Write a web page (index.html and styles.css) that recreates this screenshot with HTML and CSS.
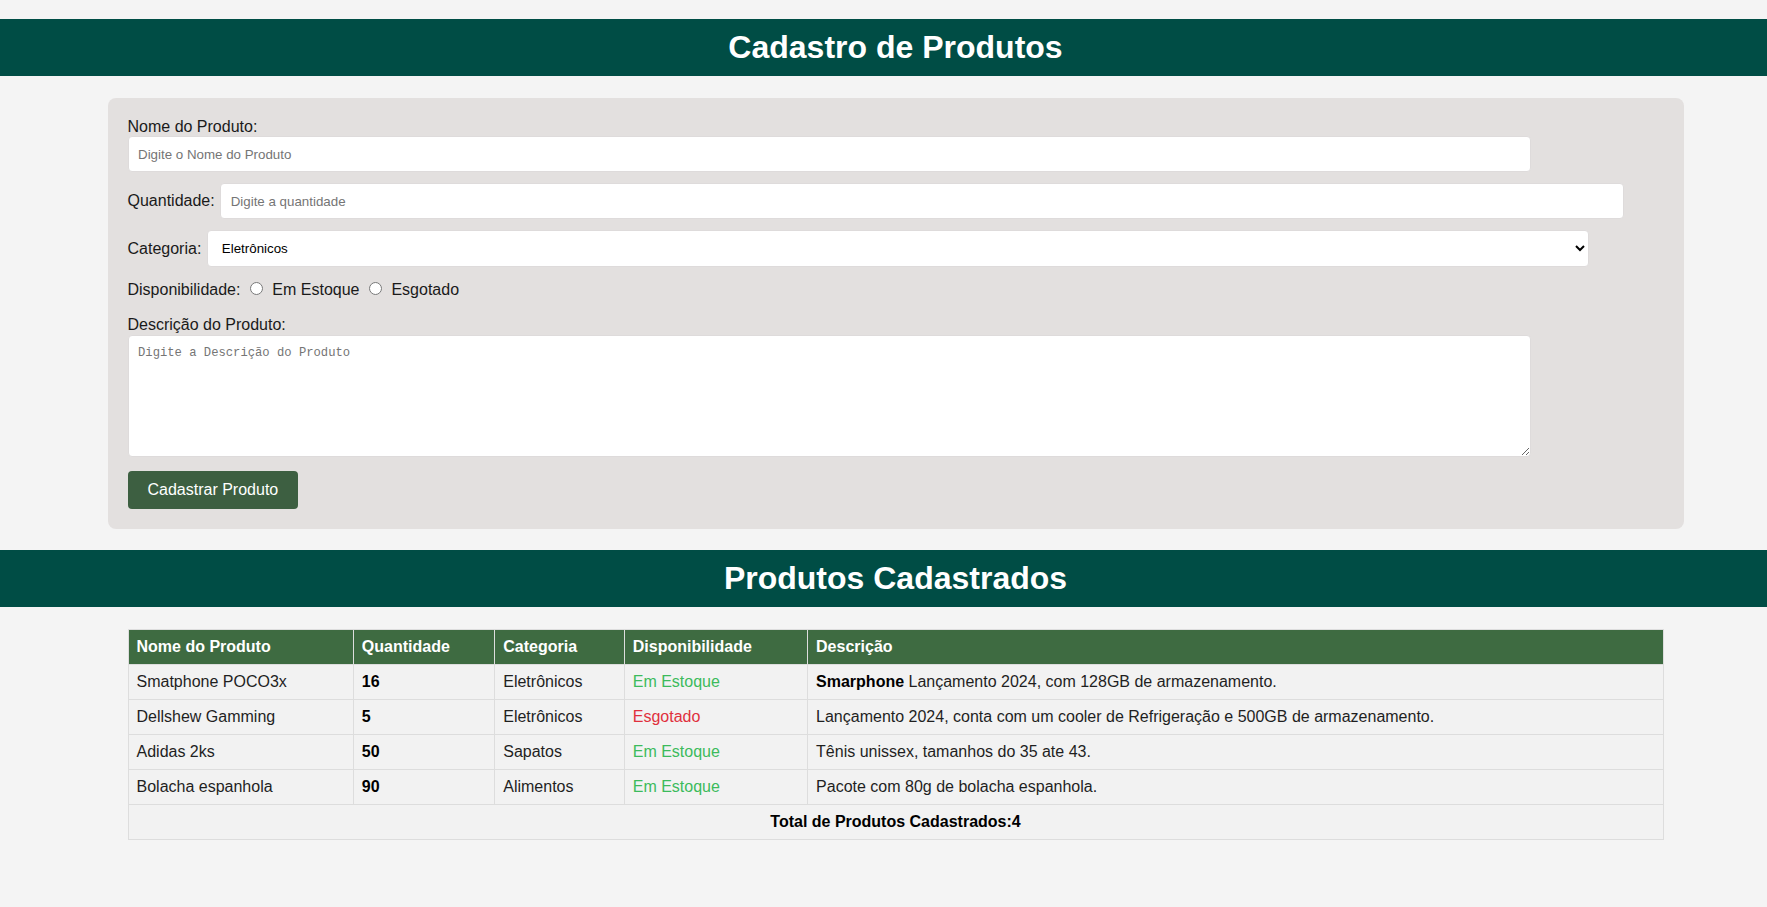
FILE: index.html
```html
<!DOCTYPE html>
<html lang="pt-BR">
<head>
<meta charset="utf-8">
<title>Cadastro de Produtos</title>
<link rel="stylesheet" href="styles.css">
</head>
<body>
<header class="bar bar-top"><h1 class="bar-title">Cadastro de Produtos</h1></header>
<main class="page">
  <form class="card">
    <label class="block-label first-label" for="nome">Nome do Produto:</label>
    <input id="nome" class="field field-block" type="text" placeholder="Digite o Nome do Produto">
    <div class="row">
      <label for="qtd">Quantidade:</label>
      <input id="qtd" class="field" type="text" placeholder="Digite a quantidade">
    </div>
    <div class="row row-select">
      <label for="cat">Categoria:</label>
      <select id="cat" class="field select">
        <option>Eletrônicos</option>
        <option>Sapatos</option>
        <option>Alimentos</option>
      </select>
    </div>
    <div class="radio-row">
      Disponibilidade: <input type="radio" name="disp" id="estoque"> <label for="estoque">Em Estoque</label> <input type="radio" name="disp" id="esgotado"> <label for="esgotado">Esgotado</label>
    </div>
    <label class="block-label desc-label" for="desc">Descrição do Produto:</label>
    <textarea id="desc" class="field area" placeholder="Digite a Descrição do Produto"></textarea>
    <button type="button" class="btn">Cadastrar Produto</button>
  </form>
</main>
<header class="bar bar-second"><h2 class="bar-title">Produtos Cadastrados</h2></header>
<main class="page">
  <section class="list">
    <table class="products">
      <thead>
        <tr><th>Nome do Produto</th><th>Quantidade</th><th>Categoria</th><th>Disponibilidade</th><th>Descrição</th></tr>
      </thead>
      <tbody>
        <tr><td>Smatphone POCO3x</td><td class="qty">16</td><td>Eletrônicos</td><td class="ok">Em Estoque</td><td><strong>Smarphone</strong> Lançamento 2024, com 128GB de armazenamento.</td></tr>
        <tr><td>Dellshew Gamming</td><td class="qty">5</td><td>Eletrônicos</td><td class="out">Esgotado</td><td>Lançamento 2024, conta com um cooler de Refrigeração e 500GB de armazenamento.</td></tr>
        <tr><td>Adidas 2ks</td><td class="qty">50</td><td>Sapatos</td><td class="ok">Em Estoque</td><td>Tênis unissex, tamanhos do 35 ate 43.</td></tr>
        <tr><td>Bolacha espanhola</td><td class="qty">90</td><td>Alimentos</td><td class="ok">Em Estoque</td><td>Pacote com 80g de bolacha espanhola.</td></tr>
      </tbody>
      <tfoot>
        <tr><td colspan="5" class="total">Total de Produtos Cadastrados:4</td></tr>
      </tfoot>
    </table>
  </section>
</main>
</body>
</html>
```

FILE: styles.css
```css
html, body {
  margin: 0;
  padding: 0;
}

body {
  background: #f4f4f4;
  font-family: "Liberation Sans", Arial, sans-serif;
  font-size: 16px;
  color: #1a1a1a;
  overflow-x: hidden;
}

.bar {
  background: #004d45;
  color: #ffffff;
  text-align: center;
  padding: 10px 0 10px 24px;
}

.bar-top {
  margin-top: 19px;
}

.bar-second {
  margin-top: 21px;
}

.bar-title {
  margin: 0;
  font-size: 32px;
  font-weight: bold;
  line-height: 37px;
}

.page {
  padding-left: 24px;
}

.card {
  box-sizing: border-box;
  width: 1576px;
  margin: 22px auto 0;
  padding: 20px 20px 20px;
  background: #e3e0df;
  border-radius: 8px;
}

.block-label {
  display: block;
}

.first-label {
  margin-bottom: 0;
}

.field {
  font-family: "Liberation Sans", Arial, sans-serif;
  font-size: 13.33px;
  width: 90%;
  padding: 9.5px;
  border: 1px solid #dedbdb;
  border-radius: 4px;
  background: #ffffff;
  color: #000;
  margin: 0;
}

.field::placeholder {
  color: #757575;
}

.field-block {
  display: block;
  margin-bottom: 11px;
}

.row {
  display: flex;
  align-items: center;
  gap: 5.5px;
  margin-bottom: 11px;
}

.row-select {
  margin-bottom: 12px;
}

.row .field {
  flex: none;
}

.select {
  box-sizing: border-box;
  height: 37px;
  padding: 0 6px 0 10px;
}

.radio-row {
  line-height: 18px;
}

.radio-row input {
  margin: 3px 5px 0 5px;
}

.desc-label {
  margin-top: 17px;
  margin-bottom: 1px;
}

.area {
  display: block;
  height: 101px;
  font-family: "Liberation Mono", monospace;
  font-size: 12.2px;
  resize: vertical;
}

.btn {
  display: block;
  margin-top: 14px;
  padding: 10px 20px;
  font-family: "Liberation Sans", Arial, sans-serif;
  font-size: 16px;
  line-height: 18px;
  color: #ffffff;
  background: #3d5f41;
  border: none;
  border-radius: 4px;
}

.list {
  box-sizing: border-box;
  width: 1576px;
  margin: 0 auto;
  padding: 22px 20px 20px;
}

.products {
  width: 100%;
  border-collapse: collapse;
  background: #f2f2f2;
}

.products th,
.products td {
  border: 1px solid #dddddd;
  padding: 8px;
  text-align: left;
  line-height: 18px;
}

.products th {
  background: #3e6b41;
  color: #ffffff;
  font-weight: bold;
}

.products td {
  color: #1f1f1f;
}

.products .qty {
  font-weight: bold;
  color: #000;
}

.products strong {
  color: #000;
}

.products .ok {
  color: #3cbb5c;
}

.products .out {
  color: #e0303d;
}

.products .total {
  text-align: center;
  font-weight: bold;
  color: #000;
}
```
